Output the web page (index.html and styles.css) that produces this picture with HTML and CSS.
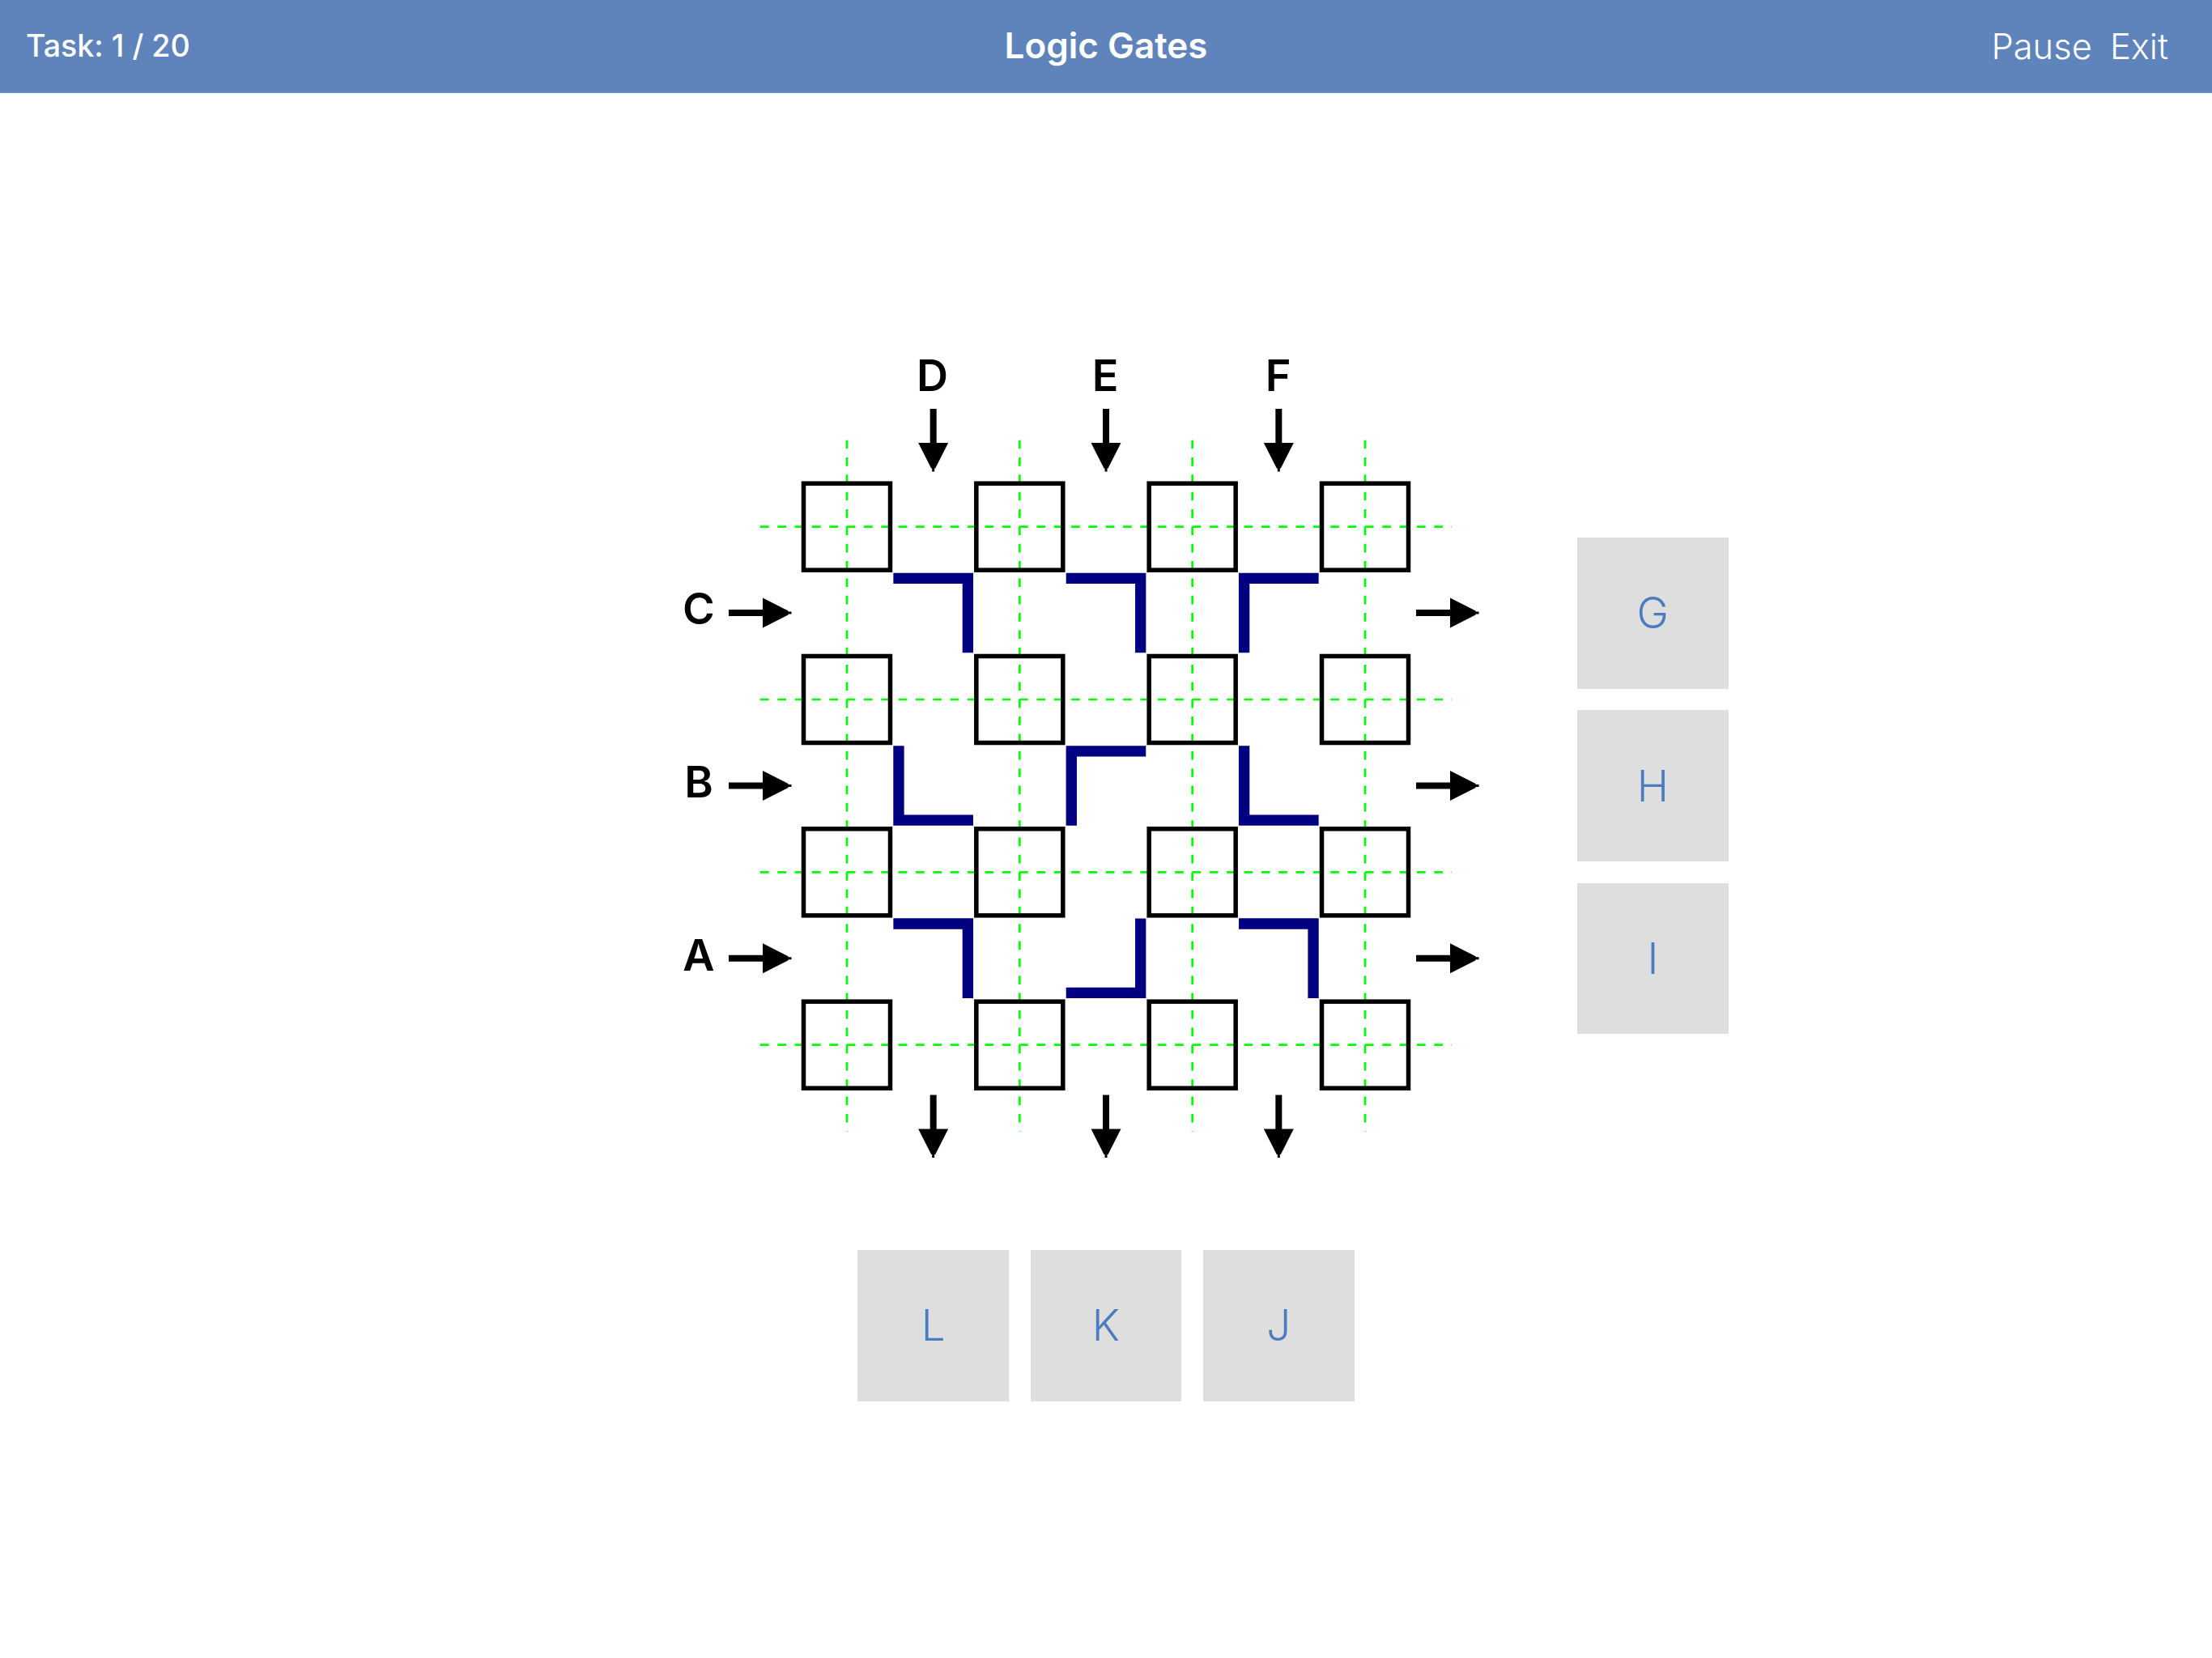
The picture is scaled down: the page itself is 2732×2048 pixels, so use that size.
FILE: index.html
```html
<!DOCTYPE html>
<html lang="en">
<head>
<meta charset="utf-8">
<title>Logic Gates</title>
<link rel="stylesheet" href="styles.css">
</head>
<body>
<header class="topbar">
  <div class="task">Task: 1 / 20</div>
  <div class="title">Logic Gates</div>
  <nav class="actions"><span>Pause</span><span>Exit</span></nav>
</header>
<main class="stage">
  <svg class="board" viewBox="834 430 1064 1020" xmlns="http://www.w3.org/2000/svg">
    <defs>
      <g id="arrow"><path class="shaft" d="M0 0V44"/><path class="head" d="M-18.5 42H18.5L2.500 73.500H1.500V77.500H-1.500V73.500H-2.500Z"/></g>
      <rect id="gate" class="gate" x="-53.500" y="-53.500" width="107" height="107"/>
      <path id="tr" class="wire" d="M-49.300 -42.700H42.700V49.300"/>
      <path id="tl" class="wire" d="M49.300 -42.700H-42.700V49.300"/>
      <path id="bl" class="wire" d="M-42.700 -49.300V42.700H49.300"/>
      <path id="br" class="wire" d="M42.700 -49.300V42.700H-49.300"/>
    </defs>
    <g class="guides">
      <path d="M939 650.670H1793M939 864H1793M939 1077.330H1793M939 1290.670H1793"/>
      <path d="M1046 543.670V1397.670M1259.330 543.670V1397.670M1472.670 543.670V1397.670M1686 543.670V1397.670"/>
    </g>
    <use href="#gate" x="1046" y="650.670"/><use href="#gate" x="1259.330" y="650.670"/><use href="#gate" x="1472.670" y="650.670"/><use href="#gate" x="1686" y="650.670"/>
    <use href="#gate" x="1046" y="864"/><use href="#gate" x="1259.330" y="864"/><use href="#gate" x="1472.670" y="864"/><use href="#gate" x="1686" y="864"/>
    <use href="#gate" x="1046" y="1077.330"/><use href="#gate" x="1259.330" y="1077.330"/><use href="#gate" x="1472.670" y="1077.330"/><use href="#gate" x="1686" y="1077.330"/>
    <use href="#gate" x="1046" y="1290.670"/><use href="#gate" x="1259.330" y="1290.670"/><use href="#gate" x="1472.670" y="1290.670"/><use href="#gate" x="1686" y="1290.670"/>

    <use href="#tr" x="1152.670" y="757"/><use href="#tr" x="1366" y="757"/><use href="#tl" x="1579.330" y="757"/>
    <use href="#bl" x="1152.670" y="970.500"/><use href="#tl" x="1366" y="970.500"/><use href="#bl" x="1579.330" y="970.500"/>
    <use href="#tr" x="1152.670" y="1183.700"/><use href="#br" x="1366" y="1183.700"/><use href="#tr" x="1579.330" y="1183.700"/>

    <use href="#arrow" transform="translate(1152.670 505)"/><use href="#arrow" transform="translate(1366 505)"/><use href="#arrow" transform="translate(1579.330 505)"/>
    <use href="#arrow" transform="translate(1152.670 1352.500)"/><use href="#arrow" transform="translate(1366 1352.500)"/><use href="#arrow" transform="translate(1579.330 1352.500)"/>
    <use href="#arrow" transform="translate(900 757) rotate(-90)"/><use href="#arrow" transform="translate(900 970.500) rotate(-90)"/><use href="#arrow" transform="translate(900 1183.700) rotate(-90)"/>
    <use href="#arrow" transform="translate(1749 757) rotate(-90)"/><use href="#arrow" transform="translate(1749 970.500) rotate(-90)"/><use href="#arrow" transform="translate(1749 1183.700) rotate(-90)"/>

    <text class="label" x="1151.500" y="483">D</text>
    <text class="label" x="1365" y="483">E</text>
    <text class="label" x="1578.500" y="483">F</text>
    <text class="label" x="863" y="771">C</text>
    <text class="label" x="863" y="984.500">B</text>
    <text class="label" x="863" y="1198.500">A</text>
  </svg>
  <div class="choices choices-side">
    <button class="choice">G</button>
    <button class="choice">H</button>
    <button class="choice">I</button>
  </div>
  <div class="choices choices-bottom">
    <button class="choice">L</button>
    <button class="choice">K</button>
    <button class="choice">J</button>
  </div>
</main>
</body>
</html>
```
FILE: styles.css
```css
* { box-sizing: border-box; }
html, body { margin: 0; height: 100%; background: #fff; }
body { font-family: Inter, "Liberation Sans", sans-serif; }

.topbar {
  height: 115px;
  background: #5f83bb;
  border-bottom: 1px solid #6f90c2;
  color: #fff;
  display: grid;
  grid-template-columns: 1fr auto 1fr;
  align-items: center;
}
.task { margin-left: 32px; padding-bottom: 2px; font-size: 37.6px; font-weight: 500; }
.title { padding-bottom: 2px; font-size: 44px; font-weight: 600; }
.actions { justify-self: end; margin-right: 54px; display: flex; gap: 22px; font-size: 43.5px; font-weight: 350; }

.stage {
  display: grid;
  grid-template-columns: 186.67px 1064px 186.67px;
  grid-template-rows: 1020px auto;
  column-gap: 50px;
  row-gap: 94px;
  justify-content: center;
  padding-top: 315px;
}
.board { grid-column: 2; grid-row: 1; width: 1064px; height: 1020px; display: block; }

.guides path { fill: none; stroke: #00ff00; stroke-width: 2.67; stroke-dasharray: 10.67 10.67; }
.gate { fill: none; stroke: #000; stroke-width: 5.5; }
.wire { fill: none; stroke: #000080; stroke-width: 13.33; stroke-linejoin: miter; }
.shaft { fill: none; stroke: #000; stroke-width: 8; }
.head { fill: #000; }
.label { font-family: Inter, "Liberation Sans", sans-serif; font-size: 54px; font-weight: 600; text-anchor: middle; fill: #000; }

.choices { display: flex; gap: 26.67px; }
.choices-side { grid-column: 3; grid-row: 1; flex-direction: column; padding-top: 234px; }
.choices-bottom { grid-column: 2; grid-row: 2; justify-content: center; }
.choice {
  width: 186.67px;
  height: 186.67px;
  padding: 0;
  border: 0;
  background: #dedede;
  color: #4a7cc0;
  font-family: inherit;
  font-size: 53px;
  font-weight: 350;
}
```
